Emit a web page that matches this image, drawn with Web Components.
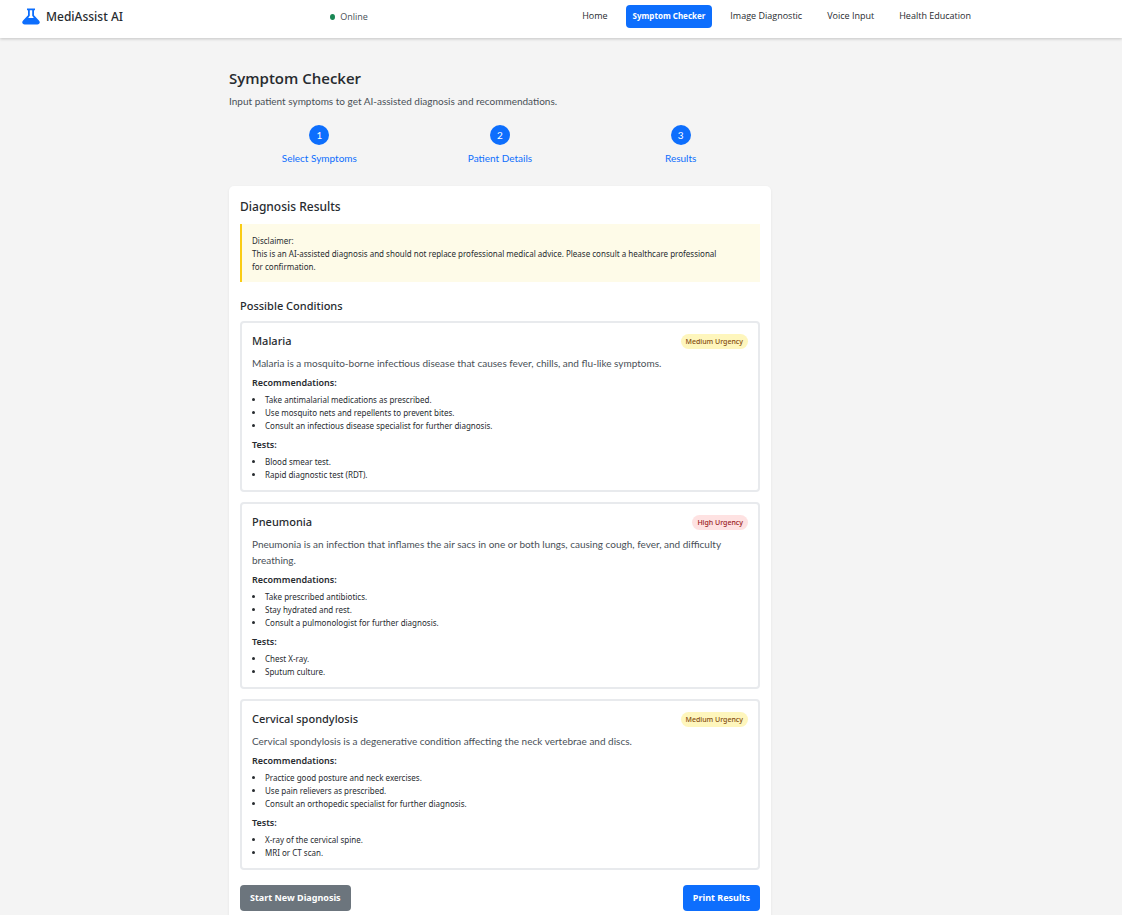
<!DOCTYPE html>
<html lang="en">
<head>
<meta charset="utf-8">
<meta name="viewport" content="width=device-width, initial-scale=1">
<title>MediAssist AI</title>
<style>
  html { background: #f4f4f4; }
  body {
    --blue: #0d6efd;
    --ink: #272b2f;
    --muted: #495057;
    --gutter: 122px;
    --narrow: 8px;
    --wide: 10px/13px Lato, "Noto Sans", sans-serif;
    margin: 0;
    color: var(--ink);
    font: 9px/13px "Noto Sans", "Open Sans", sans-serif;
  }
</style>
</head>
<body>
<medi-app></medi-app>
<script>
const define = (name, html, setup) => {
  const template = document.createElement('template');
  template.innerHTML = '<style>*{box-sizing:border-box}h1,h2,h3,h4,p,ul,ol{margin:0;padding:0}</style>' + html;
  customElements.define(name, class extends HTMLElement {
    constructor() {
      super();
      this.attachShadow({ mode: 'open' }).append(template.content.cloneNode(true));
    }
    connectedCallback() { if (setup) setup(this, this.shadowRoot); }
  });
};

define('medi-brand', `
  <style>
    :host { display: block; }
    a { display: flex; align-items: center; gap: 6px; color: inherit; text-decoration: none; font-size: 12px; line-height: 18px; font-weight: 500; }
    svg { display: block; width: 18px; height: 18px; fill: var(--blue); }
  </style>
  <a href="#"><svg viewBox="0 0 18 18" aria-hidden="true"><path fill-rule="evenodd" d="M5 .5h8v1.800h-1v4.900l4.900 5.200c1.700 1.800.8 4.100-1.600 4.100H2.700c-2.400 0-3.300-2.300-1.600-4.100L6 7.200V2.300H5zM7.800 2.300v5.500L6.200 10h5.600l-1.600-2.200V2.300z"/></svg><span><slot></slot></span></a>`);

define('online-status', `
  <style>
    :host { display: flex; align-items: center; gap: 5px; color: var(--muted); font-family: "Open Sans", sans-serif; }
    i { width: 5px; height: 6px; border-radius: 50%; background: #198754; }
  </style>
  <i></i><span role="status"><slot></slot></span>`);

define('nav-link', `
  <style>
    :host { display: block; }
    a { display: block; padding: 4px 7px 6px; border-radius: 4px; color: var(--ink); text-decoration: none; font: 9px/13px "Open Sans", sans-serif; }
    :host([active]) a { background: var(--blue); color: #fff; font: 700 8px/13px "Noto Sans", sans-serif; }
  </style>
  <a href="#"><slot></slot></a>`, (el, root) => {
    if (el.hasAttribute('active')) root.querySelector('a').setAttribute('aria-current', 'page');
  });

define('medi-header', `
  <style>
    :host { display: block; background: #fff; box-shadow: 0 1px 3px #0003; padding: 5px var(--gutter) 10px 0; }
    div { display: flex; align-items: center; justify-content: space-between; max-width: 956px; margin: 0 auto; }
    nav { display: flex; gap: 11px; }
  </style>
  <header><div>
    <medi-brand>MediAssist AI</medi-brand>
    <online-status>Online</online-status>
    <nav aria-label="Main">
      <nav-link>Home</nav-link><nav-link active>Symptom Checker</nav-link><nav-link>Image Diagnostic</nav-link><nav-link>Voice Input</nav-link><nav-link>Health Education</nav-link>
    </nav>
  </div></header>`);

define('wizard-step', `
  <style>
    :host { display: flex; flex: 1; flex-direction: column; align-items: center; gap: 7px; color: var(--blue); font: var(--wide); }
    b { width: 20px; height: 20px; border-radius: 50%; background: var(--blue); color: #fff; font-weight: 400; line-height: 20px; text-align: center; }
  </style>
  <b></b><span><slot></slot></span>`, (el, root) => { root.querySelector('b').textContent = el.getAttribute('number'); });

define('disclaimer-note', `
  <style>
    :host { display: block; margin-top: 8px; padding: 10px 32px 9px 10px; border-left: 2px solid #facc15; background: #fefbe8; font-size: var(--narrow); }
    p { line-height: 13px; }
  </style>
  <p>Disclaimer:</p><p><slot></slot></p>`);

define('urgency-badge', `
  <style>
    :host { display: block; padding: 0 5px; border-radius: 8px; background: #fef6bd; color: #854d0e; font-size: 7px; line-height: 15px; font-weight: 500; }
    :host([level="High"]) { background: #fee2e2; color: #991b1b; }
  </style>
  <slot></slot>`);

define('condition-card', `
  <style>
    :host { display: block; padding: 10px 10px 9px; border: 2px solid #e8eaed; border-radius: 4px; }
    header { display: flex; align-items: center; justify-content: space-between; }
    h3 { font-size: 11px; line-height: 16px; font-weight: 500; }
    .about { margin-top: 6px; color: var(--muted); font: var(--wide); line-height: 16px; }
    h4 { margin-top: 4px; font-size: 9px; line-height: 15px; font-weight: 600; }
    ul + h4 { margin-top: 5px; }
    ul { margin-top: 3px; padding-left: 13px; font-size: var(--narrow); line-height: 13px; }
  </style>
  <article>
    <header><h3></h3><urgency-badge></urgency-badge></header>
    <p class="about"><slot></slot></p>
    <h4>Recommendations:</h4><ul id="advice"></ul>
    <h4>Tests:</h4><ul id="tests"></ul>
  </article>`, (el, root) => {
    root.querySelector('h3').textContent = el.getAttribute('name');
    const badge = root.querySelector('urgency-badge');
    badge.setAttribute('level', el.getAttribute('urgency'));
    badge.textContent = el.getAttribute('urgency') + ' Urgency';
    for (const id of ['advice', 'tests']) {
      root.getElementById(id).replaceChildren(...el.getAttribute(id).split('|').map(text => {
        const li = document.createElement('li');
        li.textContent = text;
        return li;
      }));
    }
  });

define('medi-button', `
  <style>
    :host { display: block; }
    button { display: block; padding: 6px 10px; border: 0; border-radius: 4px; background: var(--blue); color: #fff; font: 700 9px/14px "Noto Sans", "Open Sans", sans-serif; cursor: pointer; }
    :host([secondary]) button { background: #6c757d; }
  </style>
  <button type="button"><slot></slot></button>`);

define('medi-app', `
  <style>
    :host { display: block; }
    main { padding: 30px var(--gutter) 0 0; }
    .column { max-width: 542px; margin: 0 auto; }
    h1 { font: 600 15px/20px "Open Sans", sans-serif; }
    .lead { margin-top: 7px; color: var(--muted); font: var(--wide); }
    ol { display: flex; margin-top: 17px; }
    .panel { margin-top: 21px; padding: 11px; border-radius: 5px; background: #fff; box-shadow: 0 1px 3px #0001; }
    h2 { font-size: 12px; line-height: 19px; font-weight: 500; }
    .sub { margin-top: 16px; font-size: 11px; line-height: 16px; }
    .list { display: grid; gap: 10px; margin-top: 7px; }
    .actions { display: flex; justify-content: space-between; margin-top: 15px; }
  </style>
  <medi-header></medi-header>
  <main><div class="column">
    <h1>Symptom Checker</h1>
    <p class="lead">Input patient symptoms to get AI-assisted diagnosis and recommendations.</p>
    <ol>
      <wizard-step role="listitem" number="1">Select Symptoms</wizard-step>
      <wizard-step role="listitem" number="2">Patient Details</wizard-step>
      <wizard-step role="listitem" number="3">Results</wizard-step>
    </ol>
    <section class="panel">
      <h2>Diagnosis Results</h2>
      <disclaimer-note>This is an AI-assisted diagnosis and should not replace professional medical advice. Please consult a healthcare professional for confirmation.</disclaimer-note>
      <h2 class="sub">Possible Conditions</h2>
      <div class="list">
        <condition-card name="Malaria" urgency="Medium"
          advice="Take antimalarial medications as prescribed.|Use mosquito nets and repellents to prevent bites.|Consult an infectious disease specialist for further diagnosis."
          tests="Blood smear test.|Rapid diagnostic test (RDT).">Malaria is a mosquito-borne infectious disease that causes fever, chills, and flu-like symptoms.</condition-card>
        <condition-card name="Pneumonia" urgency="High"
          advice="Take prescribed antibiotics.|Stay hydrated and rest.|Consult a pulmonologist for further diagnosis."
          tests="Chest X-ray.|Sputum culture.">Pneumonia is an infection that inflames the air sacs in one or both lungs, causing cough, fever, and difficulty breathing.</condition-card>
        <condition-card name="Cervical spondylosis" urgency="Medium"
          advice="Practice good posture and neck exercises.|Use pain relievers as prescribed.|Consult an orthopedic specialist for further diagnosis."
          tests="X-ray of the cervical spine.|MRI or CT scan.">Cervical spondylosis is a degenerative condition affecting the neck vertebrae and discs.</condition-card>
      </div>
      <div class="actions"><medi-button secondary>Start New Diagnosis</medi-button><medi-button>Print Results</medi-button></div>
    </section>
  </div></main>`);
</script>
</body>
</html>
